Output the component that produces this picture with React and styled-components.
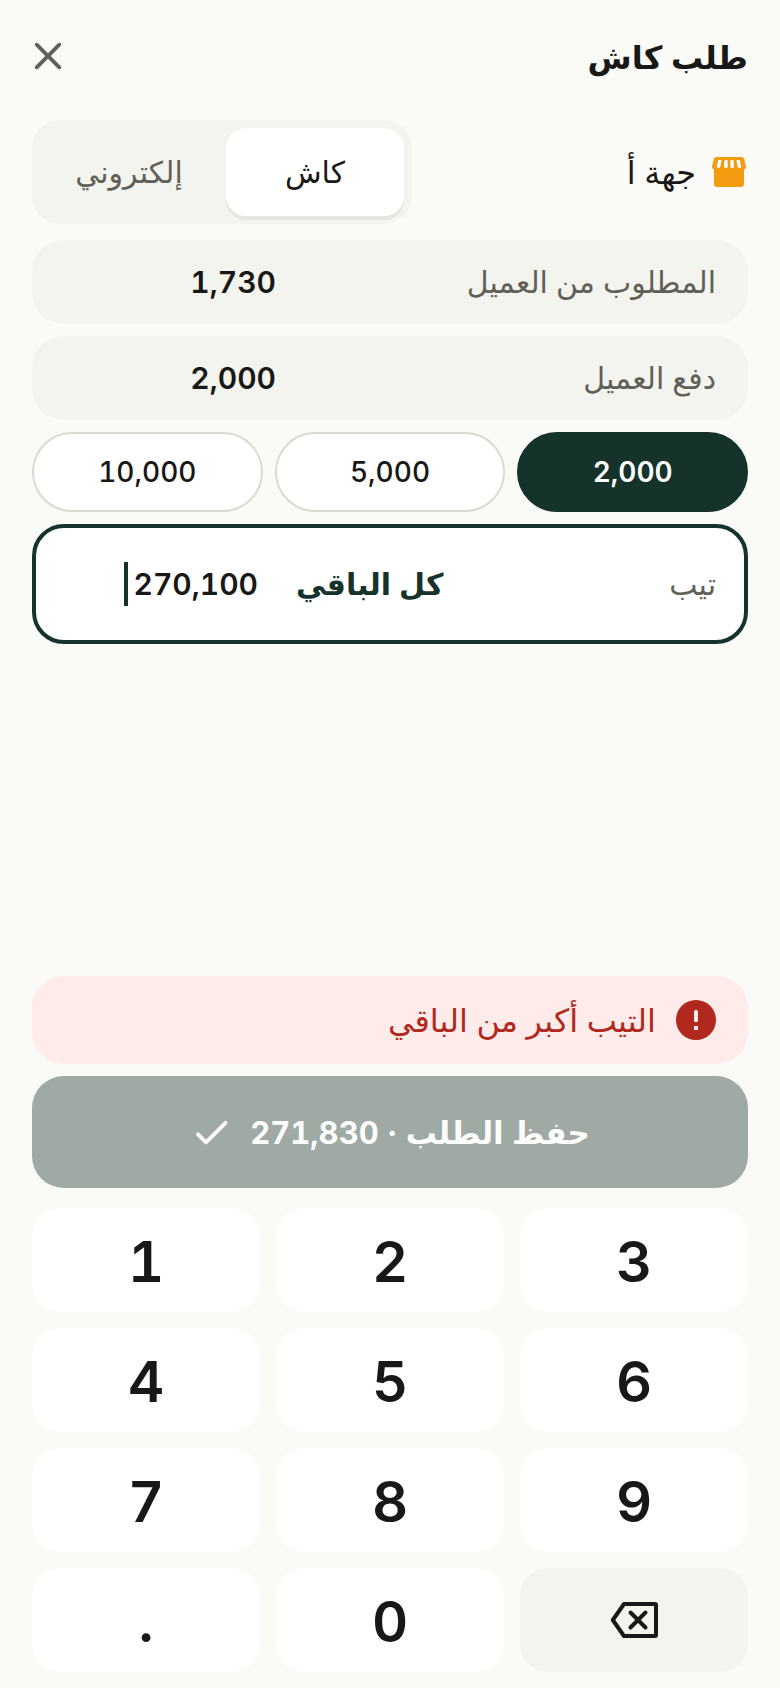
import React, { useState } from "react"
import styled, { createGlobalStyle } from "styled-components"

const GlobalStyle = createGlobalStyle`
  * {
    box-sizing: border-box;
  }

  body {
    margin: 0;
    background: #fafbf7;
    color: #181816;
    font-family: Inter, "DejaVu Sans", sans-serif;
    font-variant-numeric: tabular-nums;
  }

  button, input {
    margin: 0;
    padding: 0;
    border: 0;
    background: none;
    color: inherit;
    font: inherit;
    font-variant-numeric: inherit;
  }

  button {
    cursor: pointer;
  }

  svg {
    display: block;
    flex: none;
  }
`

const Screen = styled.main`
  display: flex;
  flex-direction: column;
  min-height: 100vh;
  padding: 0 32px 16px;
`

const Header = styled.header`
  display: flex;
  align-items: center;
  justify-content: space-between;
  height: 112px;
`

const Title = styled.h1`
  margin: 0;
  padding-top: 4px;
  font-size: 32px;
  line-height: 48px;
  font-weight: 700;
`

const IconButton = styled.button`
  color: #5f6058;
`

const SourceRow = styled.div`
  display: flex;
  align-items: center;
  justify-content: space-between;
  margin: 8px 0 16px;
`

const Source = styled.div`
  display: flex;
  align-items: center;
  gap: 14px;
  font-size: 32px;
`

const Segments = styled.div`
  display: grid;
  grid-template-columns: 1fr 1fr;
  gap: 8px;
  padding: 8px;
  border-radius: 28px;
  background: #f3f4ee;
`

const Segment = styled.button`
  width: 178px;
  height: 88px;
  border-radius: 20px;
  font-size: 30px;
  color: ${({ $active }) => ($active ? "#181816" : "#5f6058")};
  background: ${({ $active }) => ($active ? "#fff" : "transparent")};
  box-shadow: ${({ $active }) => ($active ? "0 4px 0 #e5e6e0" : "none")};
`

const Fields = styled.div`
  display: flex;
  flex-direction: column;
  gap: 12px;
`

const Field = styled.div`
  display: flex;
  align-items: center;
  justify-content: space-between;
  height: 84px;
  padding: 0 32px;
  border-radius: 32px;
  background: #f3f4ee;
`

const Label = styled.label`
  font-size: 30px;
  color: #5f6058;
`

const Amount = styled.input`
  width: 212px;
  outline: none;
  font-size: 30px;
  font-weight: 600;
  text-align: right;
`

const Chips = styled.div`
  display: grid;
  grid-template-columns: repeat(3, 1fr);
  gap: 12px;
`

const Chip = styled.button`
  height: 80px;
  border: 2px solid ${({ $active }) => ($active ? "#16332b" : "#d9dad0")};
  border-radius: 40px;
  font-size: 28px;
  font-weight: ${({ $active }) => ($active ? 600 : 500)};
  color: ${({ $active }) => ($active ? "#fff" : "#181816")};
  background: ${({ $active }) => ($active ? "#16332b" : "#fff")};
`

const TipField = styled(Field)`
  height: 120px;
  padding: 0 28px;
  border: 4px solid #16332b;
  background: #fff;
`

const TipEntry = styled.div`
  display: flex;
  align-items: center;
  gap: 38px;
`

const RestButton = styled.button`
  font-size: 30px;
  font-weight: 700;
  color: #16332b;
`

const TipValue = styled.div`
  display: flex;
  align-items: center;
  gap: 2px;
  width: 194px;
`

const TipInput = styled(Amount)`
  width: 128px;
`

const Caret = styled.span`
  width: 4px;
  height: 44px;
  background: #16332b;
`

const Footer = styled.div`
  display: flex;
  flex-direction: column;
  gap: 12px;
  margin-top: auto;
`

const Alert = styled.div`
  display: flex;
  align-items: center;
  gap: 20px;
  height: 88px;
  padding: 0 32px;
  border-radius: 32px;
  font-size: 32px;
  color: #b0281e;
  background: #ffebe9;
`

const Save = styled.button`
  display: flex;
  align-items: center;
  justify-content: center;
  gap: 16px;
  height: 112px;
  border-radius: 32px;
  font-size: 31px;
  font-weight: 700;
  color: #fdfdfc;
  background: #9eaaa3;
`

const Keypad = styled.div`
  display: grid;
  grid-template-columns: repeat(3, 1fr);
  gap: 16px;
  margin-top: 8px;
`

const Key = styled.button`
  display: flex;
  align-items: center;
  justify-content: center;
  height: 104px;
  border-radius: 28px;
  font-size: 56px;
  font-weight: 600;
  background: ${({ $muted }) => ($muted ? "#f3f4ee" : "#fff")};
`

const Digit = styled.span`
  padding-top: 4px;
`

const CloseIcon = () => (
  <svg width="32" height="32" viewBox="0 0 32 32" fill="none" stroke="currentColor" strokeWidth="3.8" strokeLinecap="round">
    <path d="M4.7 4.7l22.6 22.6M27.3 4.7L4.7 27.3" />
  </svg>
)

const StoreIcon = () => (
  <svg width="38" height="38" viewBox="0 0 38 38">
    <path
      fill="#f39c12"
      d="M6.6 4h24.8c1.5 0 2.4.8 2.8 2.2l1.6 6.4c.5 2-.2 3.3-1.8 4.4V31c0 1.900-1.100 3-3 3H7c-1.900 0-3-1.100-3-3V17c-1.600-1.100-2.300-2.400-1.800-4.400l1.600-6.400C4.200 4.800 5.100 4 6.600 4z"
    />
    <g fill="#fff">
      <path d="M8.300 7h3.200l-1.100 6.600c-.3 1.800-3.900 2-3.500-.3z" />
      <path d="M14.600 7h3v6.500c0 2-3.800 2-3.600 0z" />
      <path d="M20.400 7h3l.6 6.500c.2 2-3.600 2-3.600 0z" />
      <path d="M26.500 7h3.200l1.400 6.300c.4 2.300-3.200 2.100-3.500.3z" />
    </g>
  </svg>
)

const AlertIcon = () => (
  <svg width="40" height="40" viewBox="0 0 40 40">
    <circle cx="20" cy="20" r="20" fill="#b0281e" />
    <rect x="18" y="10" width="4" height="12" rx="1.500" fill="#ffebe9" />
    <rect x="18" y="26" width="4" height="4" fill="#ffebe9" />
  </svg>
)

const CheckIcon = () => (
  <svg width="44" height="44" viewBox="0 0 44 44" fill="none" stroke="currentColor" strokeWidth="3.800" strokeLinecap="round" strokeLinejoin="round">
    <path d="M8 24.300l8 8L35.500 12.800" />
  </svg>
)

const BackspaceIcon = () => (
  <svg width="48" height="48" viewBox="0 0 48 48" fill="none" stroke="currentColor" strokeWidth="4">
    <path d="M14 8h31c.7 0 1 .3 1 1v30c0 .7-.3 1-1 1H14L2.800 24z" strokeLinejoin="round" />
    <path d="M20.500 16.500l15 15M35.500 16.500l-15 15" strokeLinecap="round" />
  </svg>
)

const methods = ["كاش", "إلكتروني"]
const bills = ["2,000", "5,000", "10,000"]
const digits = ["1", "2", "3", "4", "5", "6", "7", "8", "9", ".", "0"]

function App() {
  const [method, setMethod] = useState(methods[0])
  const [paid, setPaid] = useState(bills[0])

  return (
    <>
      <GlobalStyle />
      <Screen dir="rtl" lang="ar">
        <Header>
          <Title>طلب كاش</Title>
          <IconButton aria-label="إغلاق"><CloseIcon /></IconButton>
        </Header>

        <SourceRow>
          <Source>
            <StoreIcon />
            <span>جهة أ</span>
          </Source>
          <Segments>
            {methods.map((name) => (
              <Segment
                key={name}
                $active={name === method}
                aria-pressed={name === method}
                onClick={() => setMethod(name)}
              >
                {name}
              </Segment>
            ))}
          </Segments>
        </SourceRow>

        <Fields>
          <Field>
            <Label htmlFor="due">المطلوب من العميل</Label>
            <Amount id="due" dir="ltr" readOnly value="1,730" />
          </Field>
          <Field>
            <Label htmlFor="paid">دفع العميل</Label>
            <Amount id="paid" dir="ltr" readOnly value={paid} />
          </Field>
          <Chips>
            {bills.map((bill) => (
              <Chip key={bill} $active={bill === paid} onClick={() => setPaid(bill)}>
                {bill}
              </Chip>
            ))}
          </Chips>
          <TipField>
            <Label htmlFor="tip">تيب</Label>
            <TipEntry>
              <RestButton>كل الباقي</RestButton>
              <TipValue>
                <TipInput id="tip" dir="ltr" readOnly value="270,100" />
                <Caret />
              </TipValue>
            </TipEntry>
          </TipField>
        </Fields>

        <Footer>
          <Alert role="alert">
            <AlertIcon />
            <span>التيب أكبر من الباقي</span>
          </Alert>
          <Save>
            <span>حفظ الطلب · 271,830</span>
            <CheckIcon />
          </Save>
          <Keypad dir="ltr">
            {digits.map((digit) => (
              <Key key={digit}><Digit>{digit}</Digit></Key>
            ))}
            <Key $muted aria-label="حذف"><BackspaceIcon /></Key>
          </Keypad>
        </Footer>
      </Screen>
    </>
  )
}

export default App
